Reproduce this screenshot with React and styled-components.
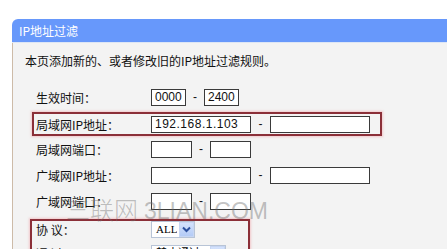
import React from "react";
import styled, { createGlobalStyle } from "styled-components";

const Global = createGlobalStyle`
  html, body { margin: 0; padding: 0; background: #ffffff; }
  body { width: 447px; height: 249px; overflow: hidden; }
  #root { width: 447px; height: 249px; overflow: hidden; }
`;

const Page = styled.div`
  position: relative;
  padding: 19px 0 0 12px;
  font-family: "Noto Sans CJK SC", "Liberation Sans", sans-serif;
  font-size: 12px;
  color: #111;
`;

const Panel = styled.div`
  display: flex;
  flex-direction: column;
`;

const Header = styled.div`
  height: 24px;
  background: #6798fb;
  border-top-left-radius: 6px;
  border-bottom: 1px solid #dde6f5;
  color: #ffffff;
  display: flex;
  align-items: center;
  padding-left: 7px;
  font-size: 12px;
  box-sizing: border-box;
`;

const Body = styled.div`
  background: #f3f3f3;
  border-left: 1px solid #cdbba8;
  padding: 8px 0 0 0;
  height: 300px;
  display: flex;
  flex-direction: column;
`;

const Desc = styled.div`
  line-height: 20px;
  padding-left: 12px;
  margin-bottom: 13px;
`;

const Row = styled.div`
  display: flex;
  align-items: center;
  height: ${(p) => p.$h || 26}px;
  padding-left: ${(p) => p.$indent ?? 23}px;
`;

const Label = styled.div`
  width: 115px;
  flex: none;
  white-space: nowrap;
`;

const Input = styled.div`
  width: ${(p) => p.$w}px;
  height: 17px;
  box-sizing: border-box;
  background: #ffffff;
  border: 1px solid #3a3a3a;
  font-family: "Liberation Sans", "DejaVu Sans", sans-serif;
  font-size: 12px;
  line-height: 15px;
  padding-left: 3px;
  letter-spacing: ${(p) => p.$ls || 0}px;
  color: #111;
  flex: none;
`;

const Dash = styled.div`
  width: ${(p) => p.$w || 18}px;
  text-align: center;
  font-family: "Liberation Sans", sans-serif;
  flex: none;
`;

const HighlightRow = styled.div`
  margin: 2px 0 0 19px;
  width: 350px;
  height: 24px;
  box-sizing: border-box;
  border: 2px solid #8b2f38;
  box-shadow: 0 0 2px 1px rgba(240, 170, 175, 0.6);
  display: flex;
  align-items: center;
`;

const HighlightGroup = styled.div`
  margin: 5px 0 0 17px;
  width: 220px;
  box-sizing: border-box;
  border: 2px solid #8b2f38;
  box-shadow: 0 0 2px 1px rgba(240, 170, 175, 0.6);
  display: flex;
  flex-direction: column;
  gap: 8px;
`;

const Select = styled.div`
  width: ${(p) => p.$w}px;
  height: 17px;
  box-sizing: border-box;
  background: #ffffff;
  border: 1px solid #b8c4d6;
  display: flex;
  align-items: stretch;
  justify-content: space-between;
  font-family: "Liberation Serif", "Noto Sans CJK SC", serif;
  font-size: 11px;
  flex: none;
`;

const SelectText = styled.span`
  padding-left: 4px;
  line-height: 15px;
  color: #000;
  white-space: nowrap;
  overflow: hidden;
`;

const Arrow = styled.div`
  width: 15px;
  flex: none;
  background: linear-gradient(#d4e2fc, #b4cbf6);
  border: 1px solid #c7d6f3;
  box-sizing: border-box;
  display: flex;
  align-items: center;
  justify-content: center;
`;

const Watermark = styled.div`
  position: absolute;
  left: 66px;
  top: 191px;
  font-size: 24px;
  font-weight: 300;
  color: rgba(110, 110, 110, 0.42);
  white-space: nowrap;
  pointer-events: none;
`;

const WmLatin = styled.span`
  font-family: "Liberation Sans", sans-serif;
  font-weight: 400;
  margin-left: 6px;
  font-size: 23px;
`;

const Chevron = () => (
  <svg width="9" height="7" viewBox="0 0 9 7">
    <path d="M1 1.5 L4.5 5 L8 1.5" fill="none" stroke="#2c4f9e" strokeWidth="2" />
  </svg>
);

export default function App() {
  return (
    <>
      <Global />
      <Page>
        <Panel>
          <Header>IP地址过滤</Header>
          <Body>
            <Desc>本页添加新的、或者修改旧的IP地址过滤规则。</Desc>
            <Row>
              <Label>生效时间：</Label>
              <Input $w={35}>0000</Input>
              <Dash>-</Dash>
              <Input $w={35}>2400</Input>
            </Row>
            <HighlightRow>
              <Row $indent={2} $h={20}>
                <Label>局域网IP地址：</Label>
                <Input $w={100} $ls={0.5}>192.168.1.103</Input>
                <Dash $w={19}>-</Dash>
                <Input $w={100} />
              </Row>
            </HighlightRow>
            <Row>
              <Label>局域网端口：</Label>
              <Input $w={41} />
              <Dash>-</Dash>
              <Input $w={41} />
            </Row>
            <Row>
              <Label>广域网IP地址：</Label>
              <Input $w={100} />
              <Dash $w={19}>-</Dash>
              <Input $w={100} />
            </Row>
            <Row>
              <Label>广域网端口：</Label>
              <Input $w={41} />
              <Dash>-</Dash>
              <Input $w={41} />
            </Row>
            <HighlightGroup>
              <Row $indent={4} $h={16}>
                <Label>协 议：</Label>
                <Select $w={44}>
                  <SelectText>ALL</SelectText>
                  <Arrow><Chevron /></Arrow>
                </Select>
              </Row>
              <Row $indent={4} $h={16}>
                <Label>通 过：</Label>
                <Select $w={75}>
                  <SelectText>禁止通过</SelectText>
                  <Arrow><Chevron /></Arrow>
                </Select>
              </Row>
            </HighlightGroup>
          </Body>
        </Panel>
        <Watermark>
          三联网<WmLatin>3LIAN.COM</WmLatin>
        </Watermark>
      </Page>
    </>
  );
}
